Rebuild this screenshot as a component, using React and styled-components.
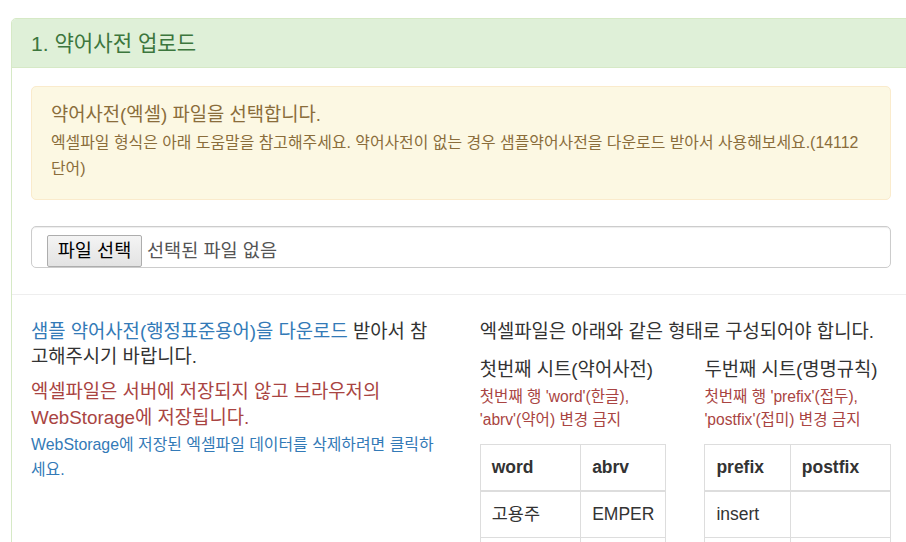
import React from "react";
import styled, { createGlobalStyle } from "styled-components";

const GlobalStyle = createGlobalStyle`
	html, body {
		margin: 0;
		padding: 0;
		overflow: hidden;
		background: #fff;
	}
	body {
		font-family: "Liberation Sans", "Noto Sans CJK KR", sans-serif;
		font-size: 18.8px;
		line-height: 25px;
		color: #333;
	}
`;

const Page = styled.div`
	padding: 18px 0 0 11px;
	width: 900px;
`;

const Panel = styled.div`
	border: 1px solid #d6e9c6;
	border-radius: 5px;
	background: #fff;
`;

const PanelHeading = styled.div`
	background: #dff0d8;
	color: #3c763d;
	border-bottom: 1px solid #d6e9c6;
	border-radius: 4px 4px 0 0;
	padding: 12.5px 19px;
`;

const PanelTitle = styled.h3`
	margin: 0;
	font-size: 21.1px;
	line-height: 23px;
	font-weight: normal;
`;

const PanelBody = styled.div`
	padding: ${(p) => p.$pad || "18px 19px 26px"};
	border-top: ${(p) => (p.$divided ? "1px solid #eee" : "none")};
`;

const Alert = styled.div`
	background: #fcf8e3;
	border: 1px solid #faebcc;
	border-radius: 5px;
	color: #8a6d3b;
	padding: 19px 19px 17px;
	margin-bottom: 26px;
`;

const AlertTitle = styled.div`
	font-size: 18.8px;
	line-height: 18px;
	margin-bottom: 6px;
`;

const AlertNote = styled.div`
	font-size: 15.9px;
	line-height: 26px;
`;

const FileBox = styled.div`
	display: flex;
	align-items: flex-start;
	gap: 5px;
	height: 42px;
	box-sizing: border-box;
	padding: 8px 15px 0;
	border: 1px solid #ccc;
	border-radius: 5px;
	box-shadow: inset 0 1px 1px rgba(0, 0, 0, 0.075);
`;

const FileButton = styled.button`
	font-family: inherit;
	font-size: 18.6px;
	line-height: 22px;
	color: #000;
	height: 32px;
	width: 95px;
	padding: 0;
	border: 1px solid #adadad;
	border-radius: 2px;
	background: linear-gradient(#f4f4f4, #e3e3e3);
	cursor: pointer;
`;

const FileName = styled.span`
	font-size: 18.6px;
	line-height: 32px;
	color: #555;
`;

const Columns = styled.div`
	display: grid;
	grid-template-columns: 1fr 1fr;
	column-gap: ${(p) => p.$gap || "37.5px"};
`;

const Para = styled.p`
	margin: 0 0 ${(p) => p.$mb || "0"};
	font-size: ${(p) => p.$size || "18.8px"};
	line-height: ${(p) => p.$lh || "25px"};
	color: ${(p) => p.$color || "#333"};
`;

const Link = styled.a`
	color: #337ab7;
	text-decoration: none;
`;

const SheetTitle = styled.div`
	font-size: 18.8px;
	line-height: 25px;
	color: #333;
	margin-top: 13px;
`;

const Rule = styled.div`
	font-size: 15.6px;
	line-height: 23px;
	color: #a94442;
	margin: 3px 0 13px;
`;

const Table = styled.table`
	width: 100%;
	border-collapse: collapse;
	border: 1px solid #ddd;
	font-size: 17.5px;
	line-height: 25px;
`;

const Th = styled.th`
	text-align: left;
	font-weight: bold;
	padding: 10px 11px;
	border: 1px solid #ddd;
	border-bottom: 2px solid #ddd;
	width: ${(p) => p.$w || "auto"};
`;

const Td = styled.td`
	padding: 10px 11px;
	border: 1px solid #ddd;
`;

const SheetTable = ({ headers, widths, rows }) => (
	<Table>
		<thead>
			<tr>
				{headers.map((h, i) => (
					<Th key={h} $w={widths[i]}>
						{h}
					</Th>
				))}
			</tr>
		</thead>
		<tbody>
			{rows.map((r, i) => (
				<tr key={i}>
					{r.map((c, j) => (
						<Td key={j}>{c}</Td>
					))}
				</tr>
			))}
		</tbody>
	</Table>
);

const App = () => {
	return (
		<>
			<GlobalStyle />
			<Page>
				<Panel>
					<PanelHeading>
						<PanelTitle>1. 약어사전 업로드</PanelTitle>
					</PanelHeading>
					<PanelBody>
						<Alert>
							<AlertTitle>약어사전(엑셀) 파일을 선택합니다.</AlertTitle>
							<AlertNote>
								엑셀파일 형식은 아래 도움말을 참고해주세요. 약어사전이 없는 경우 샘플약어사전을 다운로드 받아서 사용해보세요.(14112 단어)
							</AlertNote>
						</Alert>
						<FileBox>
							<FileButton type="button">파일 선택</FileButton>
							<FileName>선택된 파일 없음</FileName>
						</FileBox>
					</PanelBody>
					<PanelBody $divided $pad="24px 19px 40px">
						<Columns>
							<div>
								<Para $mb="10px">
									<Link href="#">샘플 약어사전(행정표준용어)을 다운로드</Link> 받아서 참고해주시기 바랍니다.
								</Para>
								<Para $color="#a94442" $lh="26px" $mb="1px">
									엑셀파일은 서버에 저장되지 않고 브라우저의 WebStorage에 저장됩니다.
								</Para>
								<Para $size="15.9px">
									<Link href="#">WebStorage에 저장된 엑셀파일 데이터를 삭제하려면 클릭하세요.</Link>
								</Para>
							</div>
							<div>
								<Para>엑셀파일은 아래와 같은 형태로 구성되어야 합니다.</Para>
								<Columns $gap="38px">
									<div>
										<SheetTitle>첫번째 시트(약어사전)</SheetTitle>
										<Rule>첫번째 행 'word'(한글), 'abrv'(약어) 변경 금지</Rule>
										<SheetTable
											headers={["word", "abrv"]}
											widths={["55%", "45%"]}
											rows={[
												["고용주", "EMPER"],
												["근로자", "WRKR"],
											]}
										/>
									</div>
									<div>
										<SheetTitle>두번째 시트(명명규칙)</SheetTitle>
										<Rule>첫번째 행 'prefix'(접두), 'postfix'(접미) 변경 금지</Rule>
										<SheetTable
											headers={["prefix", "postfix"]}
											widths={["46%", "54%"]}
											rows={[
												["insert", ""],
												["update", ""],
											]}
										/>
									</div>
								</Columns>
							</div>
						</Columns>
					</PanelBody>
				</Panel>
			</Page>
		</>
	);
};

export default App;
